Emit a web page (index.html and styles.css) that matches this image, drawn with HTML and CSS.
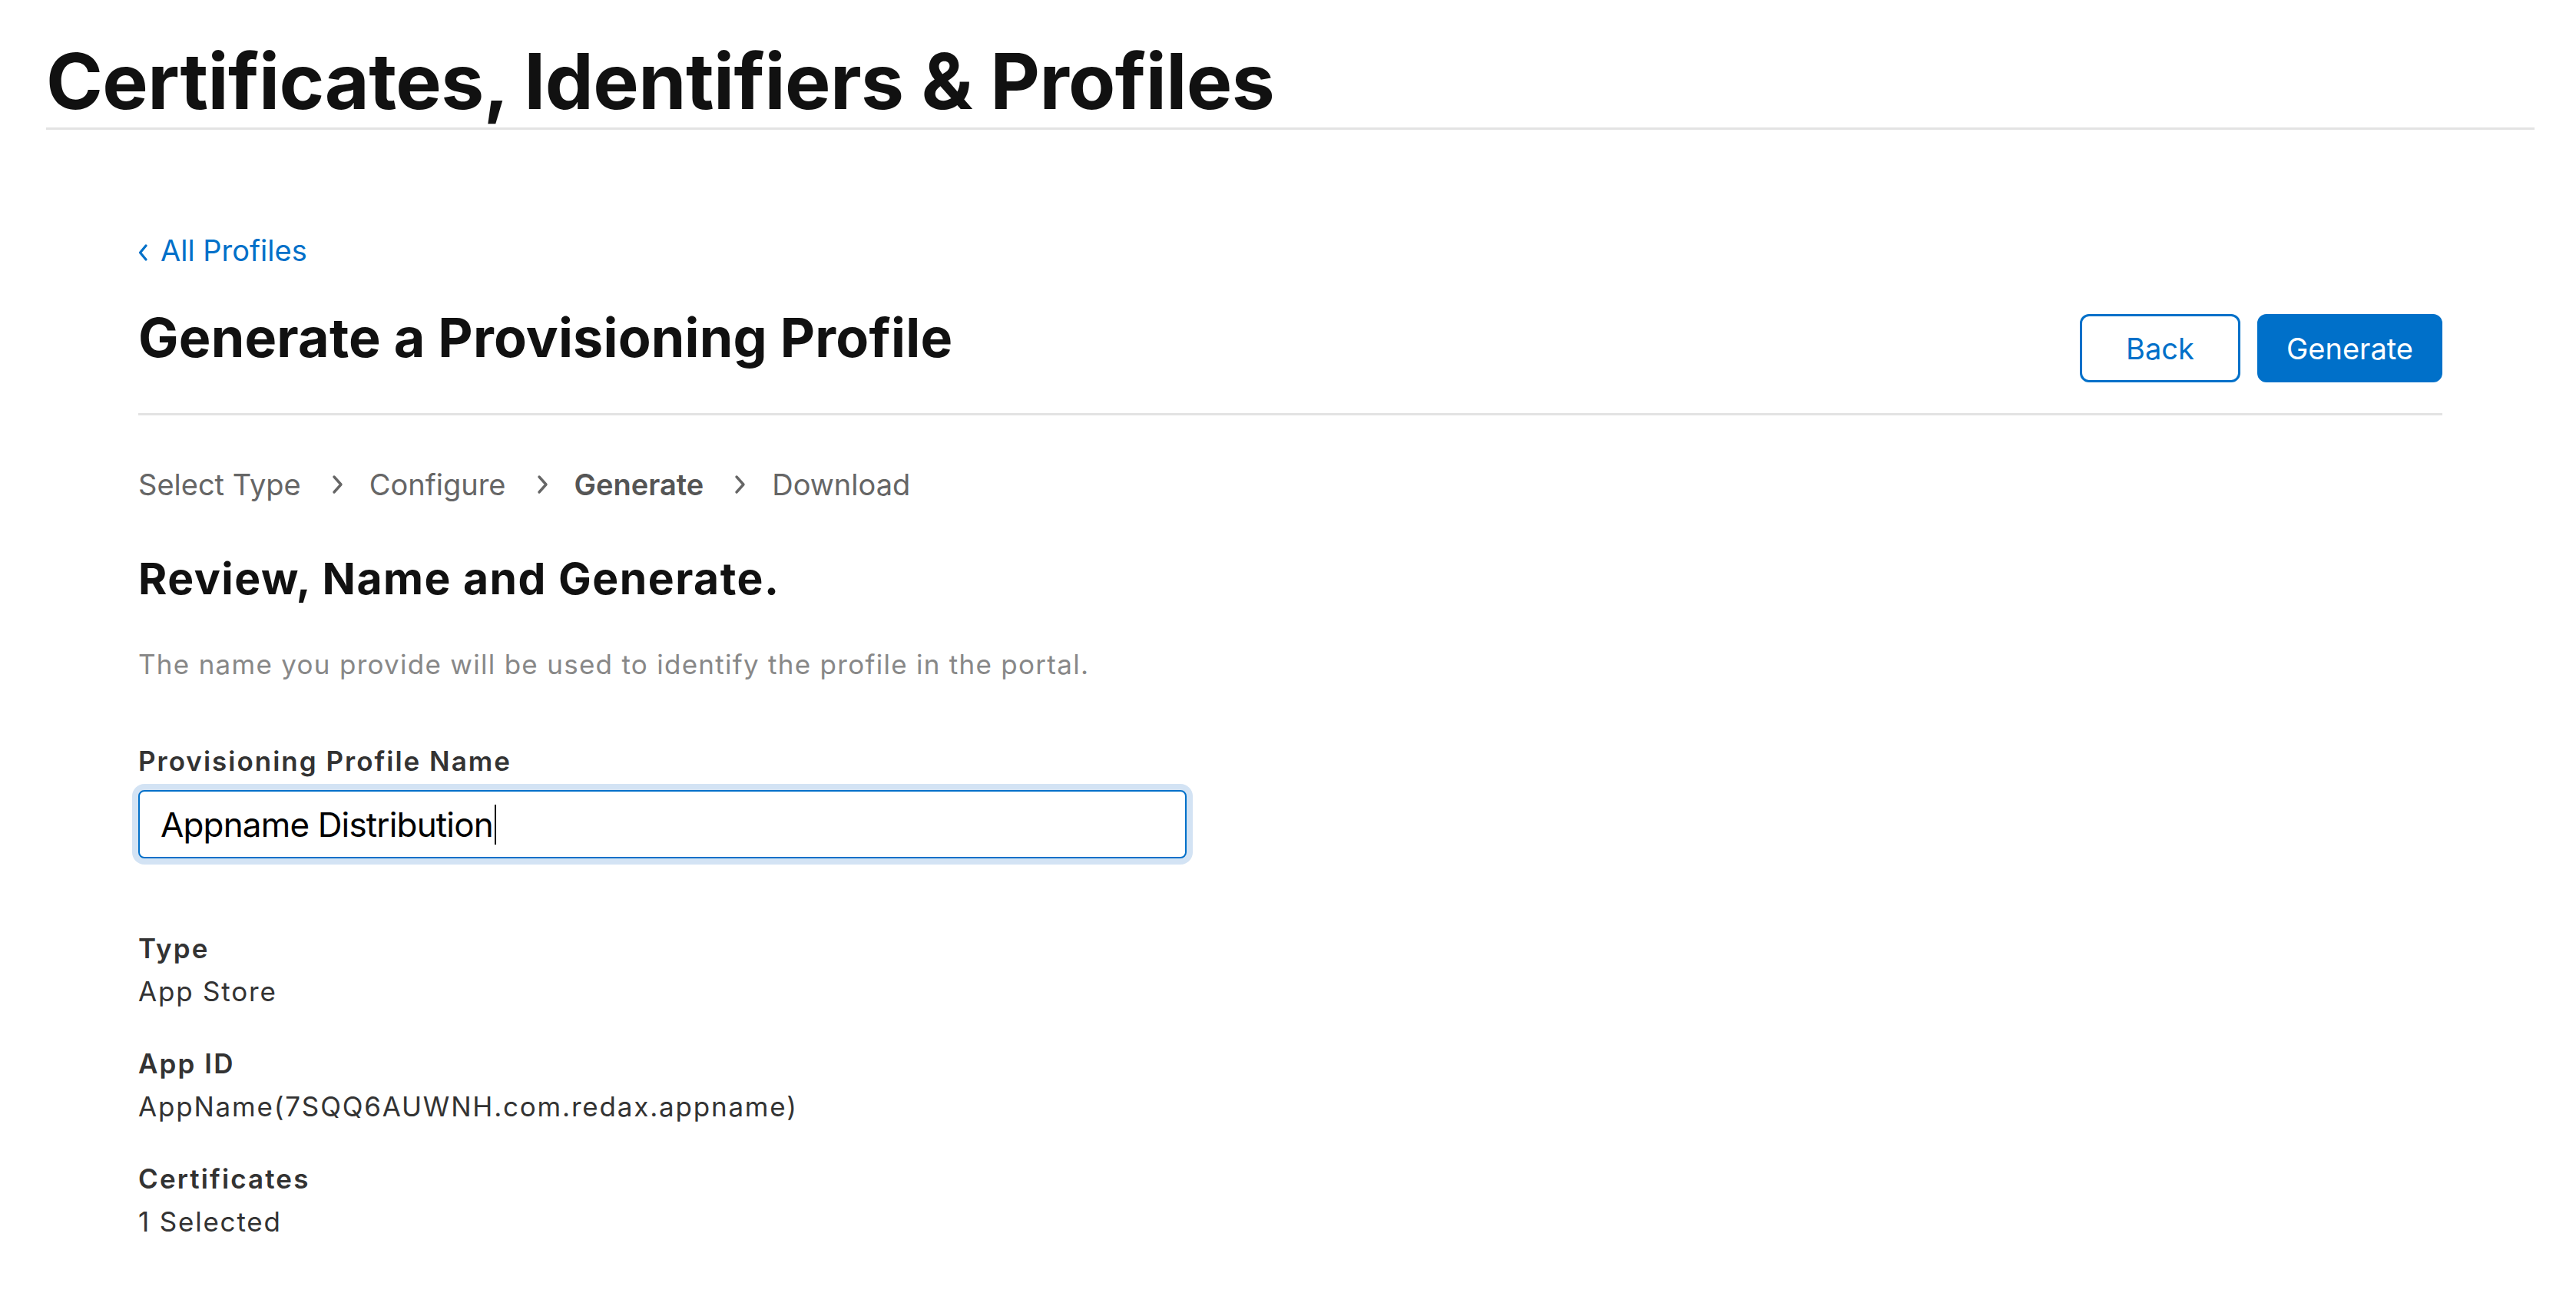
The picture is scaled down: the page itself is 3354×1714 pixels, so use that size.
FILE: index.html
```html
<!DOCTYPE html>
<html lang="en">
<head>
<meta charset="utf-8">
<title>Certificates, Identifiers &amp; Profiles</title>
<link rel="stylesheet" href="styles.css">
</head>
<body>
<header class="page-header">
  <h1 class="page-title">Certificates, Identifiers &amp; Profiles</h1>
</header>
<main class="content">
  <a class="back-link" href="#">
    <svg class="back-chevron" width="12" height="22" viewBox="0 0 12 22" aria-hidden="true"><polyline points="10,2 2.5,11 10,20" fill="none" stroke="currentColor" stroke-width="3.2" stroke-linecap="round" stroke-linejoin="round"/></svg>
    <span>All Profiles</span>
  </a>
  <div class="title-row">
    <h2 class="section-title">Generate a Provisioning Profile</h2>
    <div class="actions">
      <button class="btn btn-secondary" type="button">Back</button>
      <button class="btn btn-primary" type="button">Generate</button>
    </div>
  </div>
  <nav class="steps">
    <span class="step">Select Type</span>
    <svg class="step-chevron" width="15" height="26" viewBox="0 0 15 26" aria-hidden="true"><polyline points="3,3 12,13 3,23" fill="none" stroke="currentColor" stroke-width="3.4" stroke-linecap="round" stroke-linejoin="round"/></svg>
    <span class="step">Configure</span>
    <svg class="step-chevron" width="15" height="26" viewBox="0 0 15 26" aria-hidden="true"><polyline points="3,3 12,13 3,23" fill="none" stroke="currentColor" stroke-width="3.4" stroke-linecap="round" stroke-linejoin="round"/></svg>
    <span class="step step-current">Generate</span>
    <svg class="step-chevron" width="15" height="26" viewBox="0 0 15 26" aria-hidden="true"><polyline points="3,3 12,13 3,23" fill="none" stroke="currentColor" stroke-width="3.4" stroke-linecap="round" stroke-linejoin="round"/></svg>
    <span class="step">Download</span>
  </nav>
  <h3 class="sub-title">Review, Name and Generate.</h3>
  <p class="description">The name you provide will be used to identify the profile in the portal.</p>
  <label class="field-label" for="profile-name">Provisioning Profile Name</label>
  <div class="input-wrap">
    <div class="text-input" id="profile-name"><span class="input-text">Appname Distribution</span><span class="caret"></span></div>
  </div>
  <dl class="details">
    <div class="detail">
      <dt>Type</dt>
      <dd>App Store</dd>
    </div>
    <div class="detail">
      <dt>App ID</dt>
      <dd>AppName(7SQQ6AUWNH.com.redax.appname)</dd>
    </div>
    <div class="detail">
      <dt>Certificates</dt>
      <dd>1 Selected</dd>
    </div>
  </dl>
</main>
</body>
</html>
```
FILE: styles.css
```css
* { box-sizing: border-box; }

html, body {
  margin: 0;
  padding: 0;
  background: #ffffff;
}

body {
  font-family: Inter, "Noto Sans", "Liberation Sans", sans-serif;
  color: #111111;
}

.page-header {
  margin: 0 54px 0 60px;
  padding-top: 56px;
  padding-bottom: 10px;
  border-bottom: 3px solid #e3e3e3;
}

.page-title {
  margin: 0;
  font-size: 100px;
  line-height: 1;
  font-weight: 700;
  letter-spacing: -0.6px;
  color: #111111;
}

.content {
  margin: 0 174px 0 180px;
  padding-top: 138px;
}

.back-link {
  display: inline-flex;
  align-items: center;
  gap: 17px;
  color: #0070c9;
  text-decoration: none;
  font-size: 38px;
  line-height: 1;
  height: 38px;
}

.back-chevron {
  display: block;
  margin-top: 5px;
}

.title-row {
  display: flex;
  justify-content: space-between;
  align-items: flex-start;
  margin-top: 60px;
  padding-bottom: 40px;
  border-bottom: 3px solid #e3e3e3;
}

.section-title {
  margin: 0;
  font-size: 70px;
  line-height: 1;
  font-weight: 700;
  letter-spacing: 0.2px;
  color: #111111;
}

.actions {
  display: flex;
  gap: 22px;
  margin-top: 4px;
}

.btn {
  height: 89px;
  border-radius: 12px;
  font-family: inherit;
  font-size: 38px;
  font-weight: 400;
  padding: 0;
  cursor: pointer;
}

.btn-secondary {
  width: 209px;
  background: #ffffff;
  color: #0070c9;
  border: 3px solid #0070c9;
}

.btn-primary {
  width: 241px;
  background: #0070c9;
  color: #ffffff;
  border: 3px solid #0070c9;
}

.steps {
  display: flex;
  align-items: center;
  margin-top: 71px;
  height: 38px;
  color: #666666;
  font-size: 38px;
  line-height: 1;
}

.step-chevron {
  display: block;
  margin: 0 34px 0 40px;
  color: #666666;
}

.step-current {
  font-weight: 600;
  color: #555555;
}

.sub-title {
  margin: 75px 0 0;
  font-size: 57px;
  line-height: 1;
  font-weight: 700;
  letter-spacing: 1.5px;
  color: #111111;
}

.description {
  margin: 66px 0 0;
  font-size: 35px;
  line-height: 1;
  letter-spacing: 1.28px;
  color: #888888;
}

.field-label {
  display: block;
  margin-top: 91px;
  font-size: 35px;
  line-height: 1;
  font-weight: 600;
  letter-spacing: 2px;
  color: #333333;
}

.input-wrap {
  margin-top: 20px;
  width: 1365px;
}

.text-input {
  display: flex;
  align-items: center;
  height: 89px;
  padding: 0 27px;
  border: 2.5px solid #0070c9;
  border-radius: 8px;
  box-shadow: 0 0 0 8px #d3e3f4;
  font-size: 44px;
  letter-spacing: -0.85px;
  color: #000000;
  background: #ffffff;
}

.caret {
  display: inline-block;
  width: 2px;
  height: 52px;
  margin-left: 2px;
  background: #000000;
}

.details {
  margin: 89px 0 0;
  display: flex;
  flex-direction: column;
  gap: 38px;
}

.detail dt,
.detail dd {
  margin: 0;
  font-size: 35px;
  line-height: 56px;
  letter-spacing: 1.8px;
  color: #333333;
}

.detail dt {
  font-weight: 600;
  letter-spacing: 2.1px;
}
```
